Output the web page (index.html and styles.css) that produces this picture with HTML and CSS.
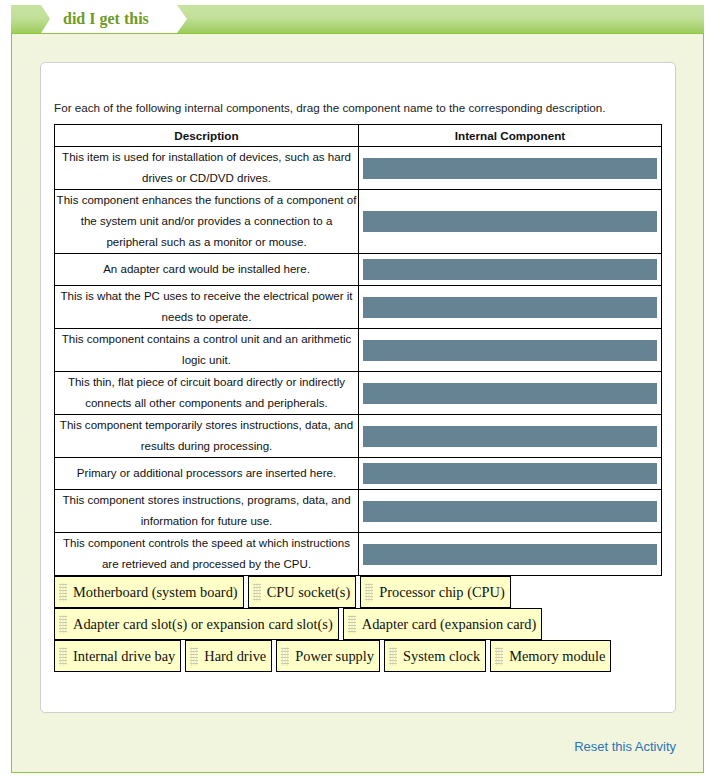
FILE: index.html
```html
<!DOCTYPE html>
<html>
<head>
<meta charset="utf-8">
<link rel="stylesheet" href="styles.css">
</head>
<body>
<div class="panel">
  <div class="panel-head">
    <div class="tab">did I get this</div>
  </div>
  <div class="panel-body">
    <div class="card">
      <p class="intro">For each of the following internal components, drag the component name to the corresponding description.</p>
      <table class="match">
        <colgroup><col class="c1"><col class="c2"></colgroup>
        <thead>
          <tr><th>Description</th><th>Internal Component</th></tr>
        </thead>
        <tbody>
          <tr><td class="desc">This item is used for installation of devices, such as hard drives or CD/DVD drives.</td><td class="drop"><div class="slot"></div></td></tr>
          <tr><td class="desc">This component enhances the functions of a component of the system unit and/or provides a connection to a peripheral such as a monitor or mouse.</td><td class="drop"><div class="slot"></div></td></tr>
          <tr><td class="desc">An adapter card would be installed here.</td><td class="drop"><div class="slot"></div></td></tr>
          <tr><td class="desc">This is what the PC uses to receive the electrical power it needs to operate.</td><td class="drop"><div class="slot"></div></td></tr>
          <tr><td class="desc">This component contains a control unit and an arithmetic logic unit.</td><td class="drop"><div class="slot"></div></td></tr>
          <tr><td class="desc">This thin, flat piece of circuit board directly or indirectly connects all other components and peripherals.</td><td class="drop"><div class="slot"></div></td></tr>
          <tr><td class="desc">This component temporarily stores instructions, data, and results during processing.</td><td class="drop"><div class="slot"></div></td></tr>
          <tr><td class="desc">Primary or additional processors are inserted here.</td><td class="drop"><div class="slot"></div></td></tr>
          <tr><td class="desc">This component stores instructions, programs, data, and information for future use.</td><td class="drop"><div class="slot"></div></td></tr>
          <tr><td class="desc">This component controls the speed at which instructions are retrieved and processed by the CPU.</td><td class="drop"><div class="slot"></div></td></tr>
        </tbody>
      </table>
      <div class="items">
        <div class="item"><span class="handle"></span>Motherboard (system board)</div>
        <div class="item"><span class="handle"></span>CPU socket(s)</div>
        <div class="item"><span class="handle"></span>Processor chip (CPU)</div>
        <div class="item"><span class="handle"></span>Adapter card slot(s) or expansion card slot(s)</div>
        <div class="item"><span class="handle"></span>Adapter card (expansion card)</div>
        <div class="item"><span class="handle"></span>Internal drive bay</div>
        <div class="item"><span class="handle"></span>Hard drive</div>
        <div class="item"><span class="handle"></span>Power supply</div>
        <div class="item"><span class="handle"></span>System clock</div>
        <div class="item"><span class="handle"></span>Memory module</div>
      </div>
    </div>
    <div class="reset-row"><a class="reset">Reset this Activity</a></div>
  </div>
</div>
</body>
</html>
```
FILE: styles.css
```css
* { box-sizing: border-box; }
html, body { margin: 0; padding: 0; background: #fff; }
body { font-family: "Liberation Sans", Arial, sans-serif; }

.panel {
  margin: 5px 0 0 11px;
  width: 693px;
}
.panel-head {
  height: 29px;
  background: linear-gradient(to bottom, #c7e3a1 0%, #c2df99 45%, #9dcd5c 100%);
  border-bottom: 1px solid #8cc63f;
  display: flex;
}
.tab {
  margin-left: 30px;
  width: 146px;
  height: 28px;
  background: #fff;
  clip-path: polygon(0 0, calc(100% - 10px) 0, 100% 50%, calc(100% - 10px) 100%, 0 100%, 9px 50%);
  font-family: "Liberation Serif", "Times New Roman", serif;
  font-weight: bold;
  font-size: 16px;
  line-height: 28px;
  color: #6e9b24;
  padding-left: 22px;
}
.panel-body {
  background: #f1f5dd;
  border: 1px solid #8cc63f;
  border-top: none;
  padding: 28px 27px 17px 28px;
}
.card {
  background: #fff;
  border: 1px solid #cfcfcf;
  border-radius: 5px;
  padding: 37px 13px 40px 13px;
}
.intro {
  margin: 0 0 8px;
  font-size: 11.7px;
  line-height: 16px;
  color: #222;
}
.match {
  width: 607px;
  table-layout: fixed;
  border-collapse: collapse;
  font-size: 11.7px;
  color: #111;
}
.match col.c1 { width: 304px; }
.match col.c2 { width: 303px; }
.match th, .match td {
  border: 1px solid #000;
}
.match th {
  font-weight: bold;
  line-height: 21px;
  padding: 0;
  text-align: center;
}
.match td.desc {
  padding: 0;
  font-size: 11.55px;
  line-height: 21px;
  text-align: center;
  vertical-align: middle;
}
.match td.drop {
  padding: 5px 4px;
  vertical-align: middle;
}
.slot {
  height: 21px;
  background: #658393;
}
.items {
  display: flex;
  flex-wrap: wrap;
  column-gap: 4px;
  row-gap: 0;
}
.item {
  display: flex;
  align-items: center;
  height: 32px;
  background: #ffffc8;
  border: 1px solid #000;
  padding: 0 5px 0 4px;
  font-family: "Liberation Serif", "Times New Roman", serif;
  font-size: 14.4px;
  color: #111;
}
.handle {
  width: 8px;
  height: 19px;
  margin-right: 6px;
  margin-top: 1px;
  background-image: radial-gradient(circle, #c9c9b4 0.9px, transparent 1.1px);
  background-size: 2.7px 3px;
}
.reset-row {
  display: flex;
  justify-content: flex-end;
  margin-top: 26px;
}
.reset {
  font-size: 13px;
  line-height: 16px;
  color: #2b73b7;
  text-decoration: none;
}
```
